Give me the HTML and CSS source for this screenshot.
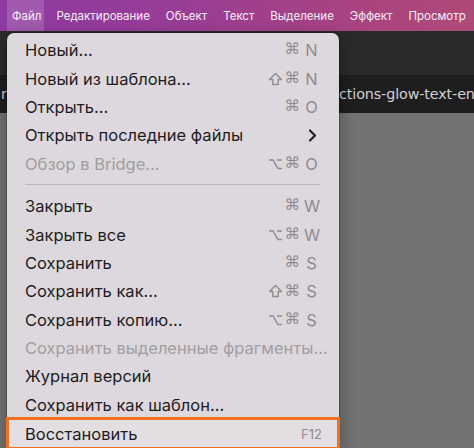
FILE: index.html
```html
<!DOCTYPE html>
<html lang="ru">
<head>
<meta charset="utf-8">
<link rel="stylesheet" href="styles.css">
</head>
<body>
<div class="app">
  <nav class="menubar">
    <span class="mb-item active">Файл</span>
    <span class="mb-item">Редактирование</span>
    <span class="mb-item">Объект</span>
    <span class="mb-item">Текст</span>
    <span class="mb-item">Выделение</span>
    <span class="mb-item">Эффект</span>
    <span class="mb-item">Просмотр</span>
  </nav>
  <div class="toolbar"></div>
  <div class="tabbar">
    <span class="tab-left">r</span>
    <span class="tab-title">ctions-glow-text-en</span>
  </div>
  <div class="canvas"></div>

  <div class="menu">
    <div class="row"><span class="label">Новый...</span><span class="sc"><span class="cmd">⌘</span><span class="key">N</span></span></div>
    <div class="row"><span class="label">Новый из шаблона...</span><span class="sc"><svg class="ico" width="15" height="14" viewBox="0 0 15 14"><path d="M7.5 1.5 L13.5 7.5 H10.2 V12.5 H4.8 V7.5 H1.5 Z" fill="none" stroke="#8f8b8f" stroke-width="1.4" stroke-linejoin="round"/></svg><span class="cmd">⌘</span><span class="key">N</span></span></div>
    <div class="row"><span class="label">Открыть...</span><span class="sc"><span class="cmd">⌘</span><span class="key">O</span></span></div>
    <div class="row"><span class="label">Открыть последние файлы</span><span class="chev"><svg width="9" height="13" viewBox="0 0 9 13"><path d="M2 1.5 L7 6.5 L2 11.5" fill="none" stroke="#222" stroke-width="2.2" stroke-linecap="round" stroke-linejoin="round"/></svg></span></div>
    <div class="row disabled"><span class="label">Обзор в Bridge...</span><span class="sc"><svg class="ico" width="15" height="12" viewBox="0 0 15 12"><path d="M1 2 H5 L10 10.5 H14 M9 2 H14" fill="none" stroke="#8f8b8f" stroke-width="1.4" stroke-linejoin="miter"/></svg><span class="cmd">⌘</span><span class="key">O</span></span></div>
    <div class="sep"></div>
    <div class="row"><span class="label">Закрыть</span><span class="sc"><span class="cmd">⌘</span><span class="key">W</span></span></div>
    <div class="row"><span class="label">Закрыть все</span><span class="sc"><svg class="ico" width="15" height="12" viewBox="0 0 15 12"><path d="M1 2 H5 L10 10.5 H14 M9 2 H14" fill="none" stroke="#8f8b8f" stroke-width="1.4"/></svg><span class="cmd">⌘</span><span class="key">W</span></span></div>
    <div class="row"><span class="label">Сохранить</span><span class="sc"><span class="cmd">⌘</span><span class="key">S</span></span></div>
    <div class="row"><span class="label">Сохранить как...</span><span class="sc"><svg class="ico" width="15" height="14" viewBox="0 0 15 14"><path d="M7.5 1.5 L13.5 7.5 H10.2 V12.5 H4.8 V7.5 H1.5 Z" fill="none" stroke="#8f8b8f" stroke-width="1.4" stroke-linejoin="round"/></svg><span class="cmd">⌘</span><span class="key">S</span></span></div>
    <div class="row"><span class="label">Сохранить копию...</span><span class="sc"><svg class="ico" width="15" height="12" viewBox="0 0 15 12"><path d="M1 2 H5 L10 10.5 H14 M9 2 H14" fill="none" stroke="#8f8b8f" stroke-width="1.4"/></svg><span class="cmd">⌘</span><span class="key">S</span></span></div>
    <div class="row disabled"><span class="label">Сохранить выделенные фрагменты...</span></div>
    <div class="row"><span class="label">Журнал версий</span></div>
    <div class="row"><span class="label">Сохранить как шаблон...</span></div>
    <div class="row highlight"><span class="label">Восстановить</span><span class="sc small"><span class="key">F12</span></span></div>
  </div>
</div>
</body>
</html>
```

FILE: styles.css
```css
* { box-sizing: border-box; }
html, body { margin: 0; padding: 0; }
body {
  width: 474px;
  height: 448px;
  overflow: hidden;
  font-family: Inter, "Noto Sans", "Liberation Sans", sans-serif;
  background: #737373;
}
.app {
  position: relative;
  width: 474px;
  height: 448px;
  display: flex;
  flex-direction: column;
}
.menubar {
  height: 31px;
  flex: none;
  display: flex;
  align-items: stretch;
  padding-left: 7px;
  background: linear-gradient(90deg, #8d3aa1 0%, #9a3d95 40%, #a8437f 75%, #ae4a78 100%);
  color: #f7eef7;
  font-size: 11.5px;
  font-weight: 400;
  overflow: hidden;
}
.mb-item {
  display: flex;
  align-items: center;
  padding: 0 8px;
  white-space: nowrap;
  flex: none;
}
.mb-item.active {
  background: rgba(255, 255, 255, 0.16);
  padding: 0 3px 0 5px;
  margin-right: 4px;
}
.toolbar {
  height: 44px;
  flex: none;
  background: #2b2a2b;
}
.tabbar {
  height: 38px;
  flex: none;
  background: #1f1e1f;
  display: flex;
  align-items: center;
  color: #d2d0d2;
  font-family: "DejaVu Sans", sans-serif;
  font-size: 14.3px;
  white-space: nowrap;
  overflow: hidden;
}
.tab-left { margin-left: 1px; width: 338px; flex: none; }
.tab-title { flex: none; letter-spacing: -0.1px; }
.canvas {
  flex: 1;
  background: #737373;
}

.menu {
  position: absolute;
  left: 7px;
  top: 33px;
  width: 332px;
  height: 420px;
  background: #ddd8dd;
  border-radius: 7px 7px 0 0;
  padding-top: 3px;
  box-shadow: 0 0 0 0.5px rgba(0,0,0,0.35), 0 6px 18px rgba(0,0,0,0.35);
  color: #1d1c1d;
  font-size: 16.5px;
}
.row {
  height: 28.4px;
  display: flex;
  align-items: center;
  justify-content: space-between;
  padding: 0 20px 0 18px;
  white-space: nowrap;
}
.row.disabled .label { color: #a19da1; }
.sc {
  display: flex;
  align-items: center;
  color: #8f8b8f;
}
.ico { display: block; margin-right: 2px; }
.cmd {
  font-family: "DejaVu Sans", sans-serif;
  font-size: 15.5px;
  line-height: 1;
}
.key {
  font-family: Inter, sans-serif;
  font-size: 16.4px;
  width: 15px;
  text-align: center;
  margin-left: 4px;
}
.sc.small .key {
  font-size: 13px;
  width: auto;
  margin-right: -2px;
}
.chev {
  display: flex;
  align-items: center;
  margin-right: 2px;
}
.sep {
  height: 14px;
  display: flex;
  align-items: center;
  padding: 0 19px 0 18px;
}
.sep::before {
  content: "";
  flex: 1;
  height: 1px;
  background: #bbb6bb;
}
.row.highlight {
  margin-top: -1px;
  height: 31px;
  background: #e2dee2;
  outline: 3px solid #f0701f;
  outline-offset: -2px;
  padding-right: 19px;
}
```
